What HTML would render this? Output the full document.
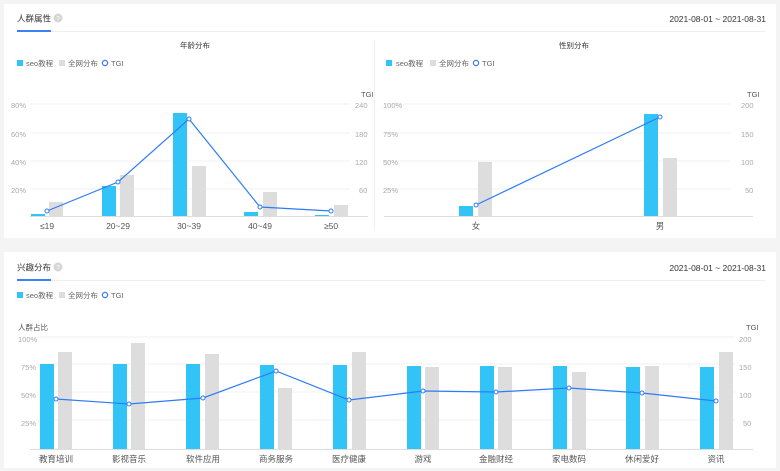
<!DOCTYPE html>
<html><head><meta charset="utf-8"><style>
html,body{margin:0;padding:0;background:#f4f4f4;width:780px;height:471px;overflow:hidden}
svg{display:block}
text{font-family:"Liberation Sans","Noto Sans CJK SC",sans-serif}
</style></head><body>
<svg width="780" height="471" viewBox="0 0 780 471" xmlns="http://www.w3.org/2000/svg">
<rect x="0" y="0" width="780" height="471" fill="#f4f4f4"/>
<rect x="4" y="4" width="772" height="234" fill="#fff"/>
<rect x="4" y="252" width="772" height="216" fill="#fff"/>

<!-- Card 1 header -->
<text x="17" y="21.5" font-size="8.5" fill="#333">人群属性</text>
<circle cx="58" cy="18" r="4.5" fill="#d6d6d6"/><text x="58" y="20.5" font-size="6" fill="#fff" text-anchor="middle">?</text>
<text x="766" y="22" font-size="8.5" fill="#333" text-anchor="end">2021-08-01 ~ 2021-08-31</text>
<rect x="17" y="31" width="749" height="1" fill="#eee"/>
<rect x="17" y="30" width="34" height="2" fill="#3b82f6"/>
<rect x="374" y="40" width="1" height="190" fill="#eee"/>

<!-- Age chart -->
<text x="195" y="48" font-size="7.5" fill="#333" text-anchor="middle">年龄分布</text>
<rect x="17" y="60" width="6" height="6" fill="#33c4f7"/><text x="26" y="66" font-size="7.5" fill="#666">seo教程</text>
<rect x="59" y="60" width="6" height="6" fill="#ddd"/><text x="68" y="66" font-size="7.5" fill="#666">全网分布</text>
<circle cx="105" cy="63" r="2.6" fill="none" stroke="#2e7cf6" stroke-width="1.2"/><text x="111" y="66" font-size="7.5" fill="#666">TGI</text>
<text x="361" y="97" font-size="7.5" fill="#555">TGI</text>
<g stroke="#f2f2f2" stroke-width="1"><line x1="30" y1="104" x2="350" y2="104"/><line x1="30" y1="133" x2="350" y2="133"/><line x1="30" y1="161" x2="350" y2="161"/><line x1="30" y1="189" x2="350" y2="189"/></g>
<line x1="30" y1="216.5" x2="368" y2="216.5" stroke="#ddd"/>
<g font-size="7.5" fill="#aaa"><text x="11" y="108">80%</text><text x="11" y="137">60%</text><text x="11" y="165">40%</text><text x="11" y="193">20%</text>
<text x="355" y="108">240</text><text x="355" y="137">180</text><text x="355" y="165">120</text><text x="359" y="193">60</text></g>
<g fill="#33c4f7"><rect x="31" y="214" width="14" height="2"/><rect x="102" y="186" width="14" height="30"/><rect x="173" y="113" width="14" height="103"/><rect x="244" y="212" width="14" height="4"/><rect x="315" y="215" width="14" height="1"/></g>
<g fill="#ddd"><rect x="49" y="202" width="14" height="14"/><rect x="120" y="175" width="14" height="41"/><rect x="192" y="166" width="14" height="50"/><rect x="263" y="192" width="14" height="24"/><rect x="334" y="205" width="14" height="11"/></g>
<polyline points="47,211 118,182 189,119 260,207 331,211" fill="none" stroke="#2e7cf6" stroke-width="1.2"/>
<g fill="#fff" stroke="#2e7cf6" stroke-width="1"><circle cx="47" cy="211" r="2"/><circle cx="118" cy="182" r="2"/><circle cx="189" cy="119" r="2"/><circle cx="260" cy="207" r="2"/><circle cx="331" cy="211" r="2"/></g>
<g font-size="8.5" fill="#555" text-anchor="middle"><text x="47" y="229">≤19</text><text x="118" y="229">20~29</text><text x="189" y="229">30~39</text><text x="260" y="229">40~49</text><text x="331" y="229">≥50</text></g>

<!-- Gender chart -->
<text x="574" y="48" font-size="7.5" fill="#333" text-anchor="middle">性别分布</text>
<rect x="386" y="60" width="6" height="6" fill="#33c4f7"/><text x="396" y="66" font-size="7.5" fill="#666">seo教程</text>
<rect x="430" y="60" width="6" height="6" fill="#ddd"/><text x="439" y="66" font-size="7.5" fill="#666">全网分布</text>
<circle cx="476" cy="63" r="2.6" fill="none" stroke="#2e7cf6" stroke-width="1.2"/><text x="482" y="66" font-size="7.5" fill="#666">TGI</text>
<text x="747" y="97" font-size="7.5" fill="#555">TGI</text>
<g stroke="#f2f2f2"><line x1="384" y1="104" x2="730" y2="104"/><line x1="384" y1="133" x2="730" y2="133"/><line x1="384" y1="161" x2="730" y2="161"/><line x1="384" y1="189" x2="730" y2="189"/></g>
<line x1="384" y1="216.5" x2="753" y2="216.5" stroke="#ddd"/>
<g font-size="7.5" fill="#aaa"><text x="383" y="108">100%</text><text x="383" y="137">75%</text><text x="383" y="165">50%</text><text x="383" y="193">25%</text>
<text x="741" y="108">200</text><text x="741" y="137">150</text><text x="741" y="165">100</text><text x="745" y="193">50</text></g>
<rect x="459" y="206" width="14" height="10" fill="#33c4f7"/><rect x="478" y="162" width="14" height="54" fill="#ddd"/>
<rect x="644" y="114" width="14" height="102" fill="#33c4f7"/><rect x="663" y="158" width="14" height="58" fill="#ddd"/>
<line x1="476" y1="205" x2="660" y2="117" stroke="#2e7cf6" stroke-width="1.2"/>
<circle cx="476" cy="205" r="2" fill="#fff" stroke="#2e7cf6"/><circle cx="660" cy="117" r="2" fill="#fff" stroke="#2e7cf6"/>
<g font-size="8.5" fill="#555" text-anchor="middle"><text x="476" y="229">女</text><text x="660" y="229">男</text></g>

<!-- Card 2 -->
<text x="17" y="270.5" font-size="8.5" fill="#333">兴趣分布</text>
<circle cx="58" cy="267" r="4.5" fill="#d6d6d6"/><text x="58" y="269.5" font-size="6" fill="#fff" text-anchor="middle">?</text>
<text x="766" y="271" font-size="8.5" fill="#333" text-anchor="end">2021-08-01 ~ 2021-08-31</text>
<rect x="17" y="280" width="749" height="1" fill="#eee"/>
<rect x="17" y="279" width="34" height="2" fill="#3b82f6"/>
<rect x="17" y="292" width="6" height="6" fill="#33c4f7"/><text x="26" y="298" font-size="7.5" fill="#666">seo教程</text>
<rect x="59" y="292" width="6" height="6" fill="#ddd"/><text x="68" y="298" font-size="7.5" fill="#666">全网分布</text>
<circle cx="105" cy="295" r="2.6" fill="none" stroke="#2e7cf6" stroke-width="1.2"/><text x="111" y="298" font-size="7.5" fill="#666">TGI</text>
<text x="18" y="330" font-size="7.5" fill="#555">人群占比</text>
<text x="746" y="330" font-size="7.5" fill="#555">TGI</text>
<g stroke="#f2f2f2"><line x1="36" y1="337" x2="735" y2="337"/><line x1="36" y1="364" x2="735" y2="364"/><line x1="36" y1="392" x2="735" y2="392"/><line x1="36" y1="420" x2="735" y2="420"/></g>
<line x1="30" y1="449.5" x2="753" y2="449.5" stroke="#ddd"/>
<g font-size="7.5" fill="#aaa"><text x="18" y="342">100%</text><text x="21" y="370">75%</text><text x="21" y="398">50%</text><text x="21" y="426">25%</text>
<text x="739" y="342">200</text><text x="739" y="370">150</text><text x="739" y="398">100</text><text x="743" y="426">50</text></g>
<g fill="#33c4f7">
<rect x="40" y="364" width="14" height="85"/><rect x="113" y="364" width="14" height="85"/><rect x="186" y="364" width="14" height="85"/><rect x="260" y="365" width="14" height="84"/><rect x="333" y="365" width="14" height="84"/><rect x="407" y="366" width="14" height="83"/><rect x="480" y="366" width="14" height="83"/><rect x="553" y="366" width="14" height="83"/><rect x="626" y="367" width="14" height="82"/><rect x="700" y="367" width="14" height="82"/></g>
<g fill="#ddd">
<rect x="58" y="352" width="14" height="97"/><rect x="131" y="343" width="14" height="106"/><rect x="205" y="354" width="14" height="95"/><rect x="278" y="388" width="14" height="61"/><rect x="352" y="352" width="14" height="97"/><rect x="425" y="367" width="14" height="82"/><rect x="498" y="367" width="14" height="82"/><rect x="572" y="372" width="14" height="77"/><rect x="645" y="366" width="14" height="83"/><rect x="719" y="352" width="14" height="97"/></g>
<polyline points="56,399 129,404 203,398 276,371 349,400 423,391 496,392 569,388 642,393 716,401" fill="none" stroke="#2e7cf6" stroke-width="1.2"/>
<g fill="#fff" stroke="#2e7cf6"><circle cx="56" cy="399" r="2"/><circle cx="129" cy="404" r="2"/><circle cx="203" cy="398" r="2"/><circle cx="276" cy="371" r="2"/><circle cx="349" cy="400" r="2"/><circle cx="423" cy="391" r="2"/><circle cx="496" cy="392" r="2"/><circle cx="569" cy="388" r="2"/><circle cx="642" cy="393" r="2"/><circle cx="716" cy="401" r="2"/></g>
<g font-size="8.5" fill="#555" text-anchor="middle"><text x="56" y="462">教育培训</text><text x="129" y="462">影视音乐</text><text x="203" y="462">软件应用</text><text x="276" y="462">商务服务</text><text x="349" y="462">医疗健康</text><text x="423" y="462">游戏</text><text x="496" y="462">金融财经</text><text x="569" y="462">家电数码</text><text x="642" y="462">休闲爱好</text><text x="716" y="462">资讯</text></g>
</svg>
</body></html>
